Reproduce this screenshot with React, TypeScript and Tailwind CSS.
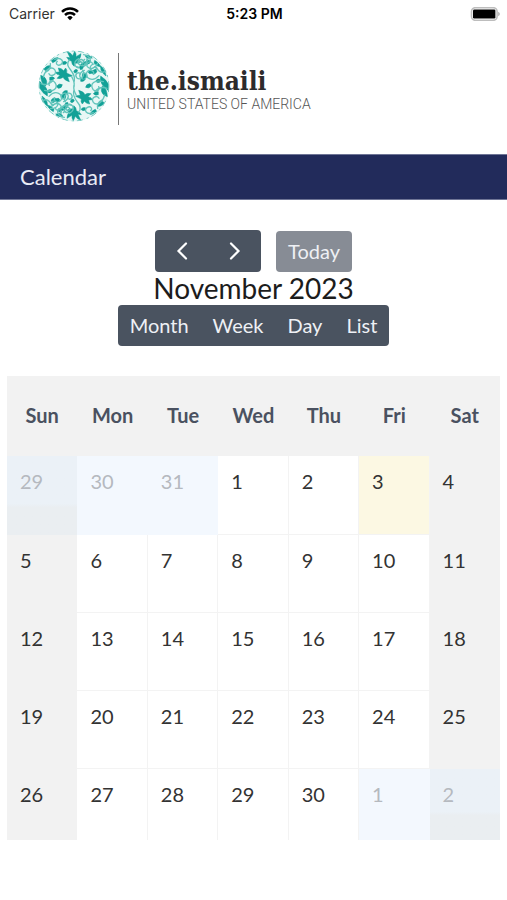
import { useState } from "react";
import clsx from "clsx";

type Day = {
  date: number;
  outside?: boolean;
  today?: boolean;
};

const weekdays = ["Sun", "Mon", "Tue", "Wed", "Thu", "Fri", "Sat"];
const views = ["Month", "Week", "Day", "List"];

// Five weeks, starting on Sunday, October 29
const weeks: Day[][] = Array.from({ length: 5 }, (_, week) =>
  Array.from({ length: 7 }, (_, weekday) => {
    const offset = week * 7 + weekday - 2;
    if (offset < 1) return { date: offset + 31, outside: true };
    if (offset > 30) return { date: offset - 30, outside: true };
    return { date: offset, today: offset === 3 };
  })
);

const WifiIcon = () => (
  <svg viewBox="0 0 18 14" className="h-[14px] w-[18px]" fill="none" stroke="#000" strokeWidth="2.5" aria-hidden="true">
    <path d="M1 4.8a11.3 11.3 0 0 1 16 0" />
    <path d="M4 8a7.1 7.1 0 0 1 10 0" />
    <path d="M6.3 10.4a3.8 3.8 0 0 1 5.4 0L9 13.2z" fill="#000" stroke="none" />
  </svg>
);

const BatteryIcon = () => (
  <svg viewBox="0 0 30 14" className="h-[14px] w-[30px]" aria-hidden="true">
    <rect x="1.5" y="0.7" width="25.6" height="12.6" rx="3.8" fill="#fff" stroke="#bdbdbd" strokeWidth="1.6" />
    <rect x="3" y="2.5" width="22.4" height="9" rx="1.2" fill="#000" />
    <path d="M28 4.7q2 .7 2 2.3t-2 2.3z" fill="#bdbdbd" />
  </svg>
);

const EmblemHalf = () => (
  <g>
    <g fill="#12a197" stroke="#12a197" strokeWidth="1.5" strokeLinejoin="round">
      <path d="M-20-102q10 1 16 11l6-13q6 8 4 16l15-9q0 13-9 19l10 4q-8 8-18 5l-3 10q-8-4-8-15-11-3-15-12l10 1z" />
      <path d="M-47-54q9 0 16 8l6-8q6 7 3 15l17 8q-8 4-14 3l5 15q-14-3-19-13-7 6-18 3l9-9q-10-1-14-9l12-1z" />
      <path d="M-91-50q9-13 20-11-1 11-11 17zM-68-76q12-11 20-9-4 11-16 15zM-100-32q15 4 18 17 2 8-4 16-13-8-14-33z" />
      <path d="M-103-14q12 12 18 18 8 10 5 26-15-9-23-24zM-96 30q11 8 15 17l2 14q-14-9-17-31z" />
      <path d="M-73-26q10-4 15 3-6 8-15 6zM-52 1q7-11 17-5-1 11-13 11zM-79 13q8-6 14 1-4 9-12 6z" />
      <path d="M-69 43q7-11 15-5 0 11-11 12zM-36 35q-2-10 7-13 8 6 3 15zM-48 70q7-7 16-2-3 11-14 9z" />
      <path d="M-28 61q-1-11 9-12 4 10-2 17zM-80 57q12 2 18 11-7 4-13-2zM-34-72q8-5 13 2-5 8-13 5z" />
      <path d="M-1-45q7-9 12-2-1 9-9 8zM22-66q8-11 16-4-3 10-13 9zM42-42q8-9 16-2-3 9-12 7zM20-20q8-8 14 0-5 9-14 6z" />
      <path d="M35-93q13 0 20 9-12 3-20-3zM62-77q10 5 14 14-11-1-16-7z" />
    </g>
    <g fill="none" stroke="#62c4bb" strokeWidth="4" strokeLinecap="round">
      <path d="M-92-27c8-27 26-32 34-22 10 14-12 24-17 12" />
      <path d="M-88 13c26 7 42-6 31-23-8-11-23-2-17 8" />
      <path d="M-75 31c20-22 45-6 36 11-8 12-25 2-19-7" />
      <path d="M-71 68c7-16 23-20 31-10 7 12-11 20-15 10" />
      <path d="M-39 83c-1-21 15-27 24-18 9 13-8 19-12 11" />
      <path d="M-26 48c-9-19 7-34 18-23 8 11-7 20-12 11" />
      <path d="M-58-80c21-8 30 8 18 16-10 5-17-4-10-10" />
      <path d="M14-82c-24 12-6 34 6 25 12-10-2-22-8-13" />
      <path d="M29-94c21 4 26 22 12 28-11 4-17-9-9-14" />
      <path d="M31-47c-24 11-12 32 2 24 12-8 2-21-6-14" />
      <path d="M71-68c-24 0-29 18-14 23 11 2 13-12 5-13" />
      <path d="M-14-78c-9 10-3 22 4 30Q4-30 1-15" />
      <path d="M-7-28Q3-10 0 0M-99-7q20 8 36-9M-71-67q3 18-13 25" />
      <path d="M-53 89q19-8 15-25M-94 44q16-9 27 12M7-58q18 8 33-9" />
    </g>
  </g>
);

const Emblem = () => (
  <svg viewBox="-108 -108 216 216" className="size-[72px] shrink-0" aria-hidden="true">
    <clipPath id="emblem-edge">
      <circle r="107" />
    </clipPath>
    <g clipPath="url(#emblem-edge)">
      <circle r="107" fill="#e8f7f5" />
      <EmblemHalf />
      <g transform="rotate(180)">
        <EmblemHalf />
      </g>
      <circle r="105" fill="none" stroke="#72c9c1" strokeWidth="3" strokeDasharray="18 9 7 12" />
    </g>
  </svg>
);

const Chevron = ({ d }: { d: string }) => (
  <svg viewBox="0 0 12 20" className="h-5 w-3" fill="none" stroke="currentColor" strokeWidth="2.2" strokeLinecap="round" aria-hidden="true">
    <path d={d} />
  </svg>
);

const StatusBar = () => (
  <div className="grid h-7 grid-cols-3 items-center pr-[7px] pl-[9px] font-[Inter,sans-serif] text-sm text-black">
    <div className="flex items-center gap-[6px] text-[#333]">
      Carrier
      <WifiIcon />
    </div>
    <div className="text-center font-semibold">5:23 PM</div>
    <div className="flex justify-end">
      <BatteryIcon />
    </div>
  </div>
);

const Logo = () => (
  <div className="flex h-[126px] items-start gap-2 pt-[22px] pl-[38px]">
    <Emblem />
    <div className="mt-[3px] h-[72px] w-px bg-[#777]" />
    <div className="pt-4 whitespace-nowrap">
      <div className="font-['DejaVu_Serif_Condensed','DejaVu_Serif',serif] text-[26px] leading-[31px] font-bold text-[#2d2b2c]">the.ismaili</div>
      <div className="font-[Roboto,sans-serif] text-sm leading-[14px] font-light text-[#555]">UNITED STATES OF AMERICA</div>
    </div>
  </div>
);

export default function App() {
  const [view, setView] = useState("Month");

  return (
    <div className="bg-white pb-[60px] font-[Lato,sans-serif] text-xl text-[#333]">
      <StatusBar />
      <Logo />

      <div className="flex h-[46px] items-center border-y border-[#6f7596] bg-[#222b5b] px-5">
        <h1 className="text-[22px] leading-7 text-[#e9ebf5]">Calendar</h1>
      </div>

      <main className="px-[7px] pt-[30px]">
        {/* Toolbar */}
        <div className="flex flex-col items-center">
          <div className="flex items-end gap-[15px]">
            <div className="flex h-[42px] overflow-hidden rounded bg-[#4a5360] text-white">
              <button type="button" aria-label="Previous month" className="flex w-[53px] items-center justify-center">
                <Chevron d="M10 2.5 2.5 10l7.5 7.5" />
              </button>
              <button type="button" aria-label="Next month" className="flex w-[53px] items-center justify-center">
                <Chevron d="M2 2.5 9.5 10 2 17.5" />
              </button>
            </div>
            <button type="button" disabled className="h-[41px] rounded bg-[#878c95] px-3 pb-[2px] text-[#eef0f4]">
              Today
            </button>
          </div>
          <h2 className="text-[28px] leading-[33px] text-[#1c1c1c]">November 2023</h2>
          <div className="flex h-[41px] rounded bg-[#4a5360] text-[#eef0f5]">
            {views.map(name => (
              <button key={name} type="button" aria-pressed={view === name} onClick={() => setView(name)} className="px-3 pb-[2px]">
                {name}
              </button>
            ))}
          </div>
        </div>

        {/* Month grid */}
        <table className="mt-[30px] w-full table-fixed border-separate border-spacing-0">
          <thead>
            <tr className="h-20 bg-[#f2f2f2] text-[#4a5160]">
              {weekdays.map(name => (
                <th key={name} scope="col" className="pb-[2px] font-bold">
                  {name}
                </th>
              ))}
            </tr>
          </thead>
          <tbody>
            {weeks.map((week, row) => (
              <tr key={row} className="h-[78px] first:h-[79px] last:h-[71px]">
                {week.map((day, col) => {
                  const weekend = col === 0 || col === 6;
                  return (
                    <td
                      key={col}
                      className={clsx(
                        "px-[13px] pt-[11px] align-top leading-7",
                        !weekend && !day.outside && "border-r border-[#f3f3f3]",
                        !weekend && !day.outside && row < 4 && "border-b",
                        day.outside && !weekend && "bg-[#f3f8fe]",
                        day.outside && weekend && "bg-linear-to-b from-[#ebf1f7] from-60% to-[#eaeef1] to-65%",
                        day.today && "bg-[#fcf8e3]",
                        !day.outside && weekend && "bg-[#f2f2f2]",
                        day.outside && "text-[#b5b9bf]"
                      )}
                    >
                      {day.date}
                    </td>
                  );
                })}
              </tr>
            ))}
          </tbody>
        </table>
      </main>
    </div>
  );
}
